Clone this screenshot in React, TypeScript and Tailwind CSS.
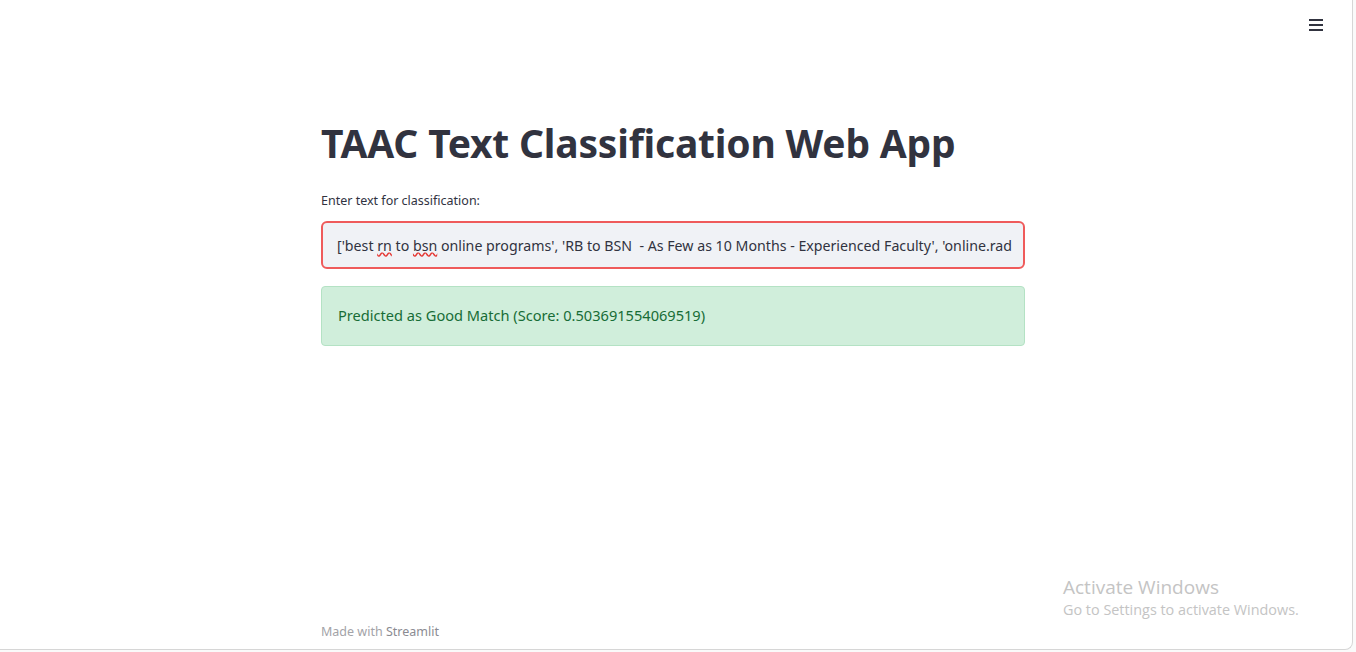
export default function App() {
  return (
    <div className="w-[1356px] h-[652px] bg-[#fafafa] overflow-hidden">
      <div
        className="relative w-[1353px] h-[650px] bg-white border-r border-b border-[#d6d6d6] rounded-br-[8px] flex flex-col"
        style={{ fontFamily: '"Source Sans Pro", "Noto Sans", sans-serif' }}
      >
        {/* top bar */}
        <div className="h-[52px] flex justify-end items-start pt-[18px] pr-[29px]">
          <button className="flex flex-col gap-[3px] w-[14px] mt-[1px]">
            <span className="block h-[2px] bg-[#31333f]"></span>
            <span className="block h-[2px] bg-[#31333f]"></span>
            <span className="block h-[2px] bg-[#31333f]"></span>
          </button>
        </div>

        {/* main */}
        <div className="flex-1 flex flex-col">
          <div className="w-[704px] ml-[321px] pt-[67px]">
            <h1 className="text-[39px] leading-[48px] font-bold text-[#31333f] tracking-[-0.2px]">
              TAAC Text Classification Web App
            </h1>
            <p className="mt-[26px] text-[12.5px] leading-[16px] text-[#31333f]">
              Enter text for classification:
            </p>
            <div className="mt-[12px] h-[48px] rounded-[6px] border-2 border-[#ef5b5b] bg-[#f0f2f6] flex items-center px-[14px] pt-[1px] overflow-hidden">
              <span className="whitespace-nowrap text-[14.2px] text-[#31333f]">
                ['best <span className="underline decoration-wavy decoration-[#e53935]">rn</span> to{' '}
                <span className="underline decoration-wavy decoration-[#e53935]">bsn</span> online programs', 'RB to BSN&nbsp; - As Few as 10 Months - Experienced Faculty', 'online.rad
              </span>
            </div>
            <div className="mt-[17px] h-[60px] rounded-[4px] border border-[#b4e2c4] bg-[#d0eedb] flex items-center px-[16px]">
              <span className="text-[14.6px] text-[#176c36]">
                Predicted as Good Match (Score: 0.503691554069519)
              </span>
            </div>
          </div>
        </div>

        {/* footer */}
        <div className="h-[24px] ml-[321px]">
          <p className="text-[12.5px] text-[#a3a3a8] mt-[-2px]">
            Made with <span className="text-[#8b8b92]">Streamlit</span>
          </p>
        </div>

        {/* OS watermark */}
        <div
          className="absolute left-[1063px] top-[575px] text-[#c4c4c4] pointer-events-none"
          style={{ fontFamily: '"Open Sans", "Noto Sans", sans-serif' }}
        >
          <div className="text-[19px] leading-[25px]">Activate Windows</div>
          <div className="text-[14.4px] leading-[20px]">Go to Settings to activate Windows.</div>
        </div>
      </div>
    </div>
  );
}
